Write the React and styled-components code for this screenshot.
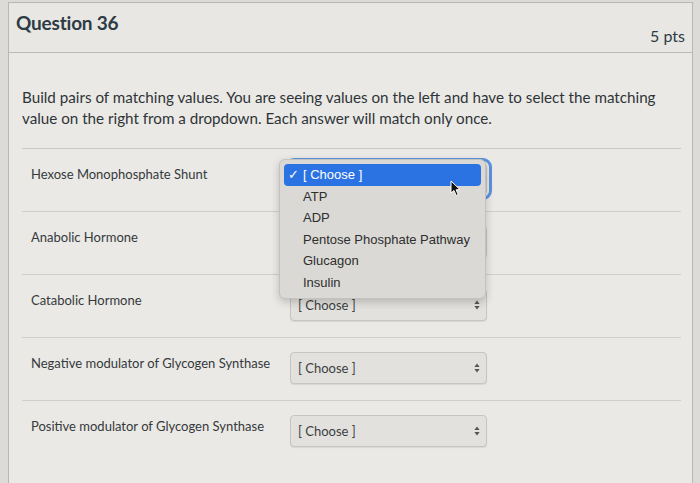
import React from 'react';
import styled, { createGlobalStyle } from 'styled-components';

const GlobalStyle = createGlobalStyle`
  html, body {
    margin: 0;
    padding: 0;
    background: #dcdbd7;
    font-family: 'Lato', 'Liberation Sans', sans-serif;
  }
`;

const rows = [
  'Hexose Monophosphate Shunt',
  'Anabolic Hormone',
  'Catabolic Hormone',
  'Negative modulator of Glycogen Synthase',
  'Positive modulator of Glycogen Synthase',
];

const options = ['ATP', 'ADP', 'Pentose Phosphate Pathway', 'Glucagon', 'Insulin'];

const Arrows = () => (
  <svg width="6" height="10" viewBox="0 0 6 10">
    <path d="M3 0.5 L5.6 4 H0.4 Z" fill="#555" />
    <path d="M3 9.5 L5.6 6 H0.4 Z" fill="#555" />
  </svg>
);

const Cursor = () => (
  <svg width="12" height="17" viewBox="0 0 12 17">
    <path d="M1 1 L1 13 L4 10.5 L6.2 15.5 L8.2 14.6 L6.1 9.8 L10 9.6 Z" fill="#111" stroke="#fff" strokeWidth="1" />
  </svg>
);

const App = () => {
  return (
    <Page>
      <GlobalStyle />
      <Card>
        <Header>
          <Title>Question 36</Title>
          <Points>5 pts</Points>
        </Header>
        <Body>
          <Prompt>
            Build pairs of matching values. You are seeing values on the left and have to select the matching
            value on the right from a dropdown. Each answer will match only once.
          </Prompt>
          <Rows>
            {rows.map((label, i) => (
              <Row key={label}>
                <Label>{label}</Label>
                <SelectWrap>
                  <Select $focused={i === 0}>
                    {/* first two selects sit under the open menu */}
                    <SelectText $covered={i < 2}>[ Choose ]</SelectText>
                    <Arrows />
                  </Select>
                  {i === 0 && (
                    <Menu>
                      <MenuItem $active>
                        <Check>✓</Check>[ Choose ]
                      </MenuItem>
                      {options.map((o) => (
                        <MenuItem key={o}>{o}</MenuItem>
                      ))}
                      <Pointer>
                        <Cursor />
                      </Pointer>
                    </Menu>
                  )}
                </SelectWrap>
              </Row>
            ))}
          </Rows>
        </Body>
      </Card>
    </Page>
  );
};

export default App;

const Page = styled.div`
  width: 700px;
  height: 483px;
  overflow: hidden;
  padding: 2px 7px 0 8px;
  box-sizing: border-box;
  background: #dcdbd7;
`;

const Card = styled.div`
  height: 100%;
  background: #eae9e5;
  border: 1px solid #b8b7b3;
  border-bottom: none;
  box-sizing: border-box;
`;

const Header = styled.div`
  display: flex;
  justify-content: space-between;
  height: 50px;
  padding: 8px 7px 0 7px;
  box-sizing: border-box;
  background: #e8e7e3;
  border-bottom: 1px solid #bab9b5;
`;

const Title = styled.div`
  font-size: 19px;
  font-weight: 700;
  color: #2d3b45;
  letter-spacing: -0.2px;
`;

const Points = styled.div`
  align-self: flex-end;
  margin-bottom: 7px;
  font-size: 16px;
  color: #2d3b45;
`;

const Body = styled.div`
  padding: 34px 11px 0 13px;
`;

const Prompt = styled.p`
  margin: 0 0 19px 0;
  font-size: 15.2px;
  line-height: 21px;
  color: #2f3438;
  padding-right: 10px;
`;

const Rows = styled.div`
  display: flex;
  flex-direction: column;
  border-top: 1px solid #c9c8c4;
`;

const Row = styled.div`
  display: flex;
  align-items: flex-start;
  padding: 14px 0 16px 9px;
  border-bottom: 1px solid #cfceca;

  &:last-child {
    border-bottom: none;
  }
`;

const Label = styled.div`
  width: 259px;
  padding-top: 3px;
  font-size: 13px;
  color: #35393c;
`;

const SelectWrap = styled.div`
  position: relative;
`;

const Select = styled.div`
  display: flex;
  align-items: center;
  justify-content: space-between;
  width: 197px;
  height: 32px;
  padding: 0 6px 0 7px;
  box-sizing: border-box;
  background: #e2e1dd;
  border: 1px solid #c6c5c1;
  border-radius: 4px;
  box-shadow: 0 1px 1px rgba(0, 0, 0, 0.08);
  font-size: 13px;
  color: #3c3f42;
  outline: ${(p) => (p.$focused ? '3px solid #5b93e0' : 'none')};
  outline-offset: 2px;
`;

const SelectText = styled.span`
  visibility: ${(p) => (p.$covered ? 'hidden' : 'visible')};
`;

const Menu = styled.div`
  position: absolute;
  z-index: 10;
  left: -11px;
  top: -4px;
  width: 207px;
  padding: 4px;
  box-sizing: border-box;
  background: #dad9d5;
  border: 1px solid #c3c2be;
  border-radius: 6px;
  box-shadow: 0 3px 8px rgba(0, 0, 0, 0.2);
  font-family: 'Liberation Sans', 'Helvetica', sans-serif;
`;

const MenuItem = styled.div`
  position: relative;
  height: 21.6px;
  line-height: 21px;
  padding-left: 19px;
  border-radius: 4px;
  font-size: 13px;
  color: ${(p) => (p.$active ? '#fff' : '#2e2e2e')};
  background: ${(p) => (p.$active ? '#2b73e3' : 'transparent')};
`;

const Check = styled.span`
  position: absolute;
  left: 4px;
  font-size: 13px;
`;

const Pointer = styled.div`
  position: absolute;
  left: 170px;
  top: 20px;
`;
